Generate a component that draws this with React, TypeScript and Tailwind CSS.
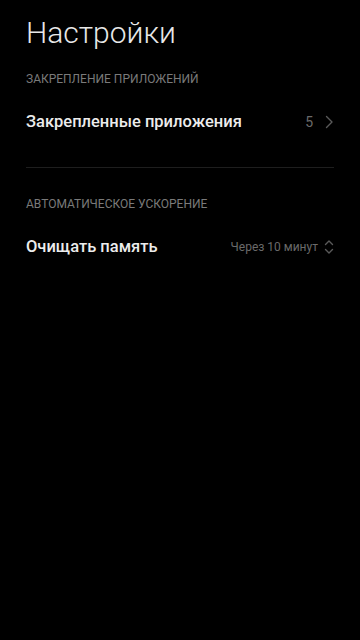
import React from "react";

const ChevronRight = () => (
  <svg width="9" height="14" viewBox="0 0 9 14" fill="none">
    <path d="M1.5 1.5L7 7l-5.5 5.5" stroke="#5a5a5a" strokeWidth="1.4" strokeLinecap="round" strokeLinejoin="round" />
  </svg>
);

const UpDown = () => (
  <svg width="10" height="16" viewBox="0 0 10 16" fill="none">
    <path d="M1.5 5.5L5 2l3.5 3.5M1.5 10.5L5 14l3.5-3.5" stroke="#5a5a5a" strokeWidth="1.4" strokeLinecap="round" strokeLinejoin="round" />
  </svg>
);

export default function App() {
  return (
    <div className="w-[360px] h-[640px] bg-black text-white font-['Roboto',sans-serif] px-[26px]">
      {/* Title */}
      <h1 className="pt-[14px] text-[30px] font-light leading-[38px] text-[#e8e8e8]">Настройки</h1>

      {/* Pinned apps */}
      <div className="mt-[20px] text-[12px] leading-[14px] text-[#7a7a7a] uppercase">
        Закрепление приложений
      </div>
      <div className="flex items-center justify-between h-[60px] mt-[6px]">
        <span className="text-[16.5px] font-medium text-[#ececec]">Закрепленные приложения</span>
        <div className="flex items-center gap-[12px]">
          <span className="text-[14px] text-[#6a6a6a]">5</span>
          <ChevronRight />
        </div>
      </div>

      <div className="h-px bg-[#1e1e1e] mt-[15px]" />

      {/* Auto boost */}
      <div className="mt-[29px] text-[12px] leading-[14px] text-[#7a7a7a] uppercase">
        Автоматическое ускорение
      </div>
      <div className="flex items-center justify-between h-[60px] mt-[6px]">
        <span className="text-[16.5px] font-medium text-[#ececec]">Очищать память</span>
        <div className="flex items-center gap-[6px]">
          <span className="text-[12px] text-[#6a6a6a]">Через 10 минут</span>
          <UpDown />
        </div>
      </div>
    </div>
  );
}
